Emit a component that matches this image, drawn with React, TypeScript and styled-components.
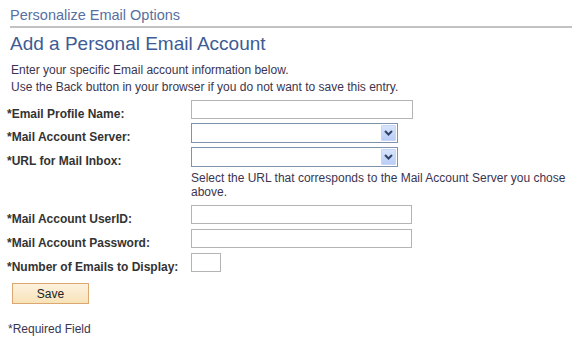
import styled, { createGlobalStyle } from 'styled-components'

const GlobalStyle = createGlobalStyle`
  body {
    margin: 0;
    background: #ffffff;
    font-family: "Liberation Sans", Arial, sans-serif;
    font-size: 12px;
    color: #333333;
  }
`

const Page = styled.div`
  width: 581px;
  height: 345px;
  padding: 0 0 0 7px;
  box-sizing: border-box;
  overflow: hidden;
`

const PageHeader = styled.div`
  margin: 0 9px 0 3px;
  padding: 5px 0 1px;
  border-bottom: 2px solid #c2c2c2;
  font-size: 14.5px;
  line-height: 20px;
  color: #57709f;
`

const Title = styled.h1`
  margin: 5px 0 0 3px;
  font-size: 19px;
  font-weight: normal;
  line-height: 22px;
  color: #3d5b94;
`

const Intro = styled.div`
  margin: 7px 0 0 4px;
  line-height: 17px;
  color: #3b3450;
`

const Form = styled.div`
  margin-top: 4px;
  display: flex;
  flex-direction: column;
`

const Row = styled.div<{ gap: number }>`
  display: flex;
  align-items: flex-start;
  margin-bottom: ${p => p.gap}px;
`

const Label = styled.label`
  width: 184px;
  height: 12px;
  flex: none;
  padding-top: 7px;
  font-weight: bold;
  line-height: 14px;
  color: #333333;
  white-space: nowrap;
`

const TextBox = styled.input<{ w: number }>`
  box-sizing: border-box;
  width: ${p => p.w}px;
  height: 19px;
  margin: 0;
  padding: 0 3px;
  border: 1px solid #b4b4b4;
  background: #ffffff;
  font-family: inherit;
  font-size: 12px;
  outline: none;
`

const SelectBox = styled.div`
  box-sizing: border-box;
  width: 207px;
  height: 20px;
  border: 1px solid #7f93ab;
  background: #ffffff;
  display: flex;
  justify-content: flex-end;
  align-items: stretch;
  padding: 1px;
`

const ArrowButton = styled.div`
  width: 15px;
  display: flex;
  align-items: center;
  justify-content: center;
  border-radius: 1px;
  background: linear-gradient(#d8e4fb, #b9cdf6);
  border: 1px solid #c7d6f3;
  box-sizing: border-box;
`

const Help = styled.div`
  margin: 4px 0 6px 184px;
  width: 385px;
  line-height: 14px;
  color: #3b3450;
`

const SaveButton = styled.button`
  display: block;
  box-sizing: border-box;
  margin: 11px 0 0 5px;
  width: 77px;
  height: 21px;
  border: 1px solid #dca870;
  background: linear-gradient(#fdf2df, #f8e2b8);
  font-family: "Liberation Sans", Arial, sans-serif;
  font-size: 12px;
  color: #222222;
  padding: 0;
`

const Required = styled.div`
  margin: 18px 0 0 1px;
  line-height: 14px;
  color: #3b3450;
`

const Chevron = () => (
  <svg width="9" height="6" viewBox="0 0 9 6">
    <path d="M1 1 L4.5 4.5 L8 1" fill="none" stroke="#2f4468" strokeWidth="2" />
  </svg>
)

const Select = () => (
  <SelectBox>
    <ArrowButton>
      <Chevron />
    </ArrowButton>
  </SelectBox>
)

export default function App() {
  return (
    <Page>
      <GlobalStyle />
      <PageHeader>Personalize Email Options</PageHeader>
      <Title>Add a Personal Email Account</Title>
      <Intro>
        Enter your specific Email account information below.
        <br />
        Use the Back button in your browser if you do not want to save this entry.
      </Intro>
      <Form>
        <Row gap={4}>
          <Label>*Email Profile Name:</Label>
          <TextBox w={222} />
        </Row>
        <Row gap={4}>
          <Label>*Mail Account Server:</Label>
          <Select />
        </Row>
        <Row gap={0}>
          <Label>*URL for Mail Inbox:</Label>
          <Select />
        </Row>
        <Help>Select the URL that corresponds to the Mail Account Server you chose above.</Help>
        <Row gap={5}>
          <Label>*Mail Account UserID:</Label>
          <TextBox w={221} />
        </Row>
        <Row gap={5}>
          <Label>*Mail Account Password:</Label>
          <TextBox w={221} />
        </Row>
        <Row gap={0}>
          <Label>*Number of Emails to Display:</Label>
          <TextBox w={30} />
        </Row>
      </Form>
      <SaveButton>Save</SaveButton>
      <Required>*Required Field</Required>
    </Page>
  )
}
